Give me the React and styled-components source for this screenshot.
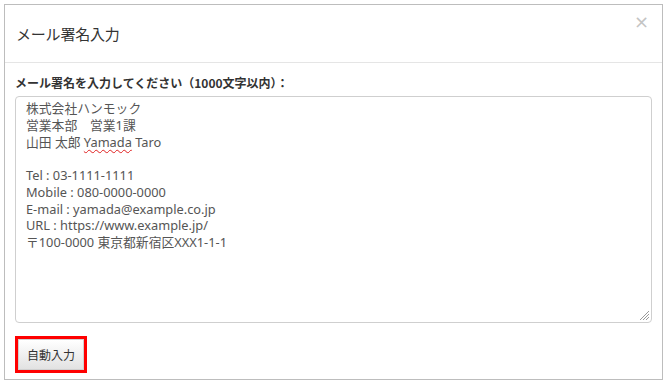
import React from "react";
import styled, { createGlobalStyle } from "styled-components";

const Global = createGlobalStyle`
  html, body { margin: 0; padding: 0; background: #fff; }
  body { font-family: "Noto Sans", "Noto Sans CJK JP", sans-serif; color: #333; }
`;

const Dialog = styled.div`
  box-sizing: border-box;
  margin: 4px 0 0 4px;
  width: 659px;
  height: 376px;
  border: 1px solid #bdbdbd;
  background: #fff;
  display: flex;
  flex-direction: column;
`;

const Header = styled.div`
  position: relative;
  height: 57px;
  border-bottom: 1px solid #e5e5e5;
  display: flex;
  align-items: center;
  padding: 0 14px 0 11px;
`;

const Title = styled.h4`
  margin: 0;
  font-family: "Noto Sans CJK JP", sans-serif;
  font-size: 15px;
  font-weight: 400;
  color: #333;
  letter-spacing: -0.2px;
`;

const Close = styled.span`
  position: absolute;
  right: 13px;
  top: 8px;
  font-family: "DejaVu Sans", sans-serif;
  font-size: 18px;
  color: #c4c4c4;
  line-height: 1;
`;

const Body = styled.div`
  padding: 11px 10px 0 10px;
  display: flex;
  flex-direction: column;
`;

const Label = styled.div`
  font-family: "Noto Sans CJK JP", sans-serif;
  font-size: 12px;
  font-weight: 700;
  line-height: 17px;
  color: #333;
  margin-bottom: 5px;
`;

const TextBox = styled.div`
  position: relative;
  box-sizing: border-box;
  height: 227px;
  border: 1px solid #cfcfcf;
  border-radius: 4px;
  padding: 3px 10px;
  font-family: "Noto Sans", "Noto Sans CJK JP", sans-serif;
  font-size: 12.8px;
  line-height: 16.75px;
  color: #555;
  white-space: pre;
`;

const Misspelled = styled.span`
  text-decoration: underline wavy #e02020;
  text-decoration-thickness: 1px;
  text-underline-offset: 2px;
`;

const Grip = styled.svg`
  position: absolute;
  right: 1px;
  bottom: 1px;
`;

const Footer = styled.div`
  margin-top: 13px;
  display: flex;
`;

const Highlight = styled.div`
  border: 3px solid #ff0000;
  display: flex;
`;

const Button = styled.button`
  box-sizing: border-box;
  width: 66px;
  height: 31px;
  border: 1px solid #d0d0d0;
  background: linear-gradient(#ffffff, #e2e2e2);
  font-family: "Noto Sans CJK JP", sans-serif;
  font-size: 12px;
  color: #333;
  padding: 0;
  cursor: pointer;
`;

export default function App() {
  return (
    <>
      <Global />
      <Dialog>
        <Header>
          <Title>メール署名入力</Title>
          <Close>×</Close>
        </Header>
        <Body>
          <Label>メール署名を入力してください（1000文字以内）：</Label>
          <TextBox role="textbox">
            {"株式会社ハンモック\n営業本部　営業1課\n山田 太郎 "}
            <Misspelled>Yamada</Misspelled>
            {" Taro\n\nTel : 03-1111-1111\nMobile : 080-0000-0000\nE-mail : yamada@example.co.jp\nURL : https://www.example.jp/\n〒100-0000 東京都新宿区XXX1-1-1"}
            <Grip width="11" height="11" viewBox="0 0 11 11">
              <g stroke="#9a9a9a" strokeWidth="1">
                <line x1="10" y1="1" x2="1" y2="10" />
                <line x1="10" y1="4" x2="4" y2="10" />
                <line x1="10" y1="7" x2="7" y2="10" />
              </g>
            </Grip>
          </TextBox>
          <Footer>
            <Highlight>
              <Button>自動入力</Button>
            </Highlight>
          </Footer>
        </Body>
      </Dialog>
    </>
  );
}
